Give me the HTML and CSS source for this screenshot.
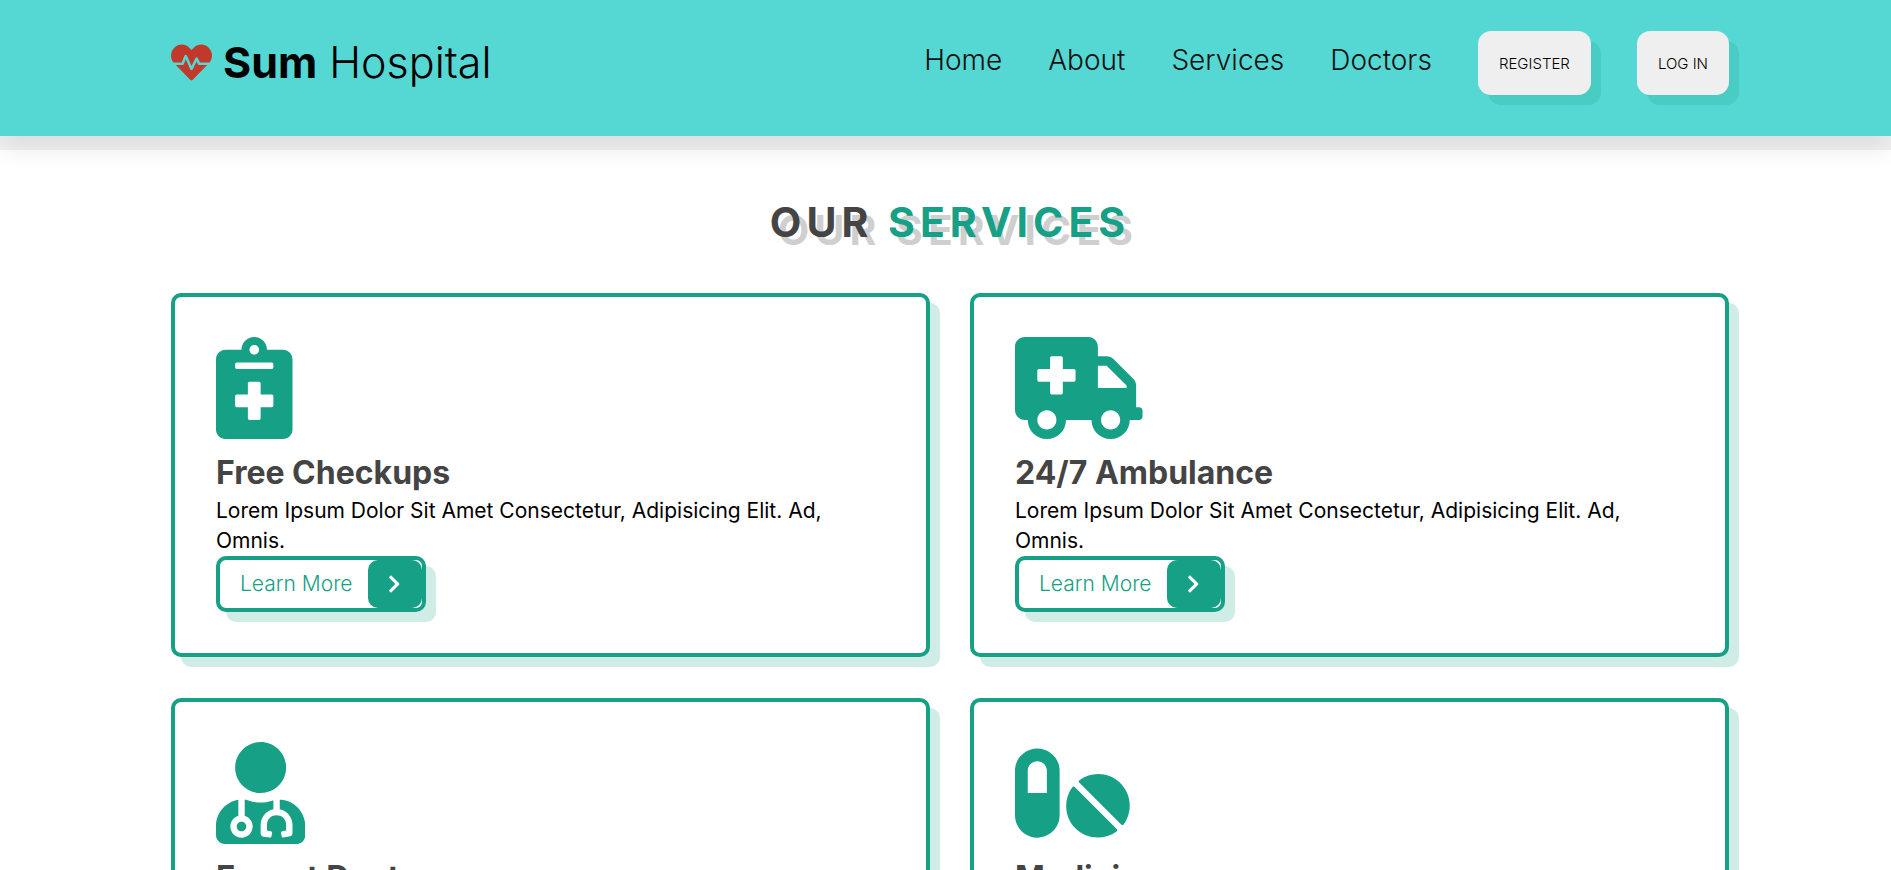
FILE: index.html
```html
<!DOCTYPE html>
<html lang="en">
<head>
<meta charset="utf-8">
<title>Sum Hospital</title>
<link rel="stylesheet" href="styles.css">
</head>
<body>
<header class="header">
  <a class="logo" href="#home">
    <svg class="logo-icon" viewBox="0 0 512 512" aria-hidden="true"><path d="M320.2 243.8l-49.7 99.4c-6 12.1-23.4 11.7-28.9-.6l-56.9-126.3-30 71.7H60.6l182.5 186.5c7.1 7.3 18.6 7.3 25.7 0L451.4 288H342.3l-22.1-44.2zM473.7 73.9l-2.4-2.5c-51.5-52.6-135.8-52.6-187.4 0L256 100l-27.9-28.5c-51.5-52.7-135.9-52.7-187.4 0l-2.4 2.4C-10.4 123.7-12.5 203 31 256h102.4l35.9-86.2c5.4-12.9 23.6-13.1 29.3-.4l58.2 129.3 49-97.9c5.9-11.8 22.7-11.8 28.6 0l27.6 55.2H481c43.5-53 41.4-132.3-7.3-182.1z"/></svg>
    <span><strong>Sum</strong> Hospital</span>
  </a>
  <nav class="nav">
    <a href="#home">Home</a>
    <a href="#about">About</a>
    <a href="#services">Services</a>
    <a href="#doctors">Doctors</a>
    <button class="account" type="button">REGISTER</button>
    <button class="account" type="button">LOG IN</button>
  </nav>
</header>
<main class="services" id="services">
  <h1 class="heading">Our <span>Services</span></h1>
  <div class="cards">
    <article class="card">
      <svg class="card-icon" viewBox="0 0 384 512" aria-hidden="true"><path d="M336 64h-80c0-35.3-28.7-64-64-64s-64 28.7-64 64H48C21.5 64 0 85.5 0 112v352c0 26.5 21.5 48 48 48h288c26.5 0 48-21.5 48-48V112c0-26.5-21.5-48-48-48zM192 40c13.3 0 24 10.7 24 24s-10.7 24-24 24-24-10.7-24-24 10.7-24 24-24zm96 304c0 4.400-3.600 8-8 8h-56v56c0 4.400-3.600 8-8 8h-48c-4.400 0-8-3.600-8-8v-56h-56c-4.400 0-8-3.600-8-8v-48c0-4.400 3.600-8 8-8h56v-56c0-4.400 3.600-8 8-8h48c4.400 0 8 3.600 8 8v56h56c4.400 0 8 3.600 8 8v48zm0-192c0 4.400-3.600 8-8 8H104c-4.400 0-8-3.600-8-8v-16c0-4.400 3.600-8 8-8h176c4.400 0 8 3.600 8 8v16z"/></svg>
      <h2>Free Checkups</h2>
      <p>Lorem Ipsum Dolor Sit Amet Consectetur, Adipisicing Elit. Ad, Omnis.</p>
      <a class="more" href="#free-checkups"><span class="more-text">Learn More</span><span class="more-arrow"><svg viewBox="0 0 320 512" aria-hidden="true"><path d="M285.476 272.971L91.132 467.314c-9.373 9.373-24.569 9.373-33.941 0l-22.667-22.667c-9.357-9.357-9.375-24.522-.04-33.901L188.505 256 34.484 101.255c-9.335-9.379-9.317-24.544.04-33.901l22.667-22.667c9.373-9.373 24.569-9.373 33.941 0L285.475 239.03c9.373 9.372 9.373 24.568.001 33.941z"/></svg></span></a>
    </article>
    <article class="card">
      <svg class="card-icon" viewBox="0 0 640 512" aria-hidden="true"><path d="M624 352h-16V243.900c0-12.700-5.100-24.900-14.100-33.900L494 110.100c-9-9-21.200-14.100-33.900-14.100H416V48c0-26.500-21.500-48-48-48H48C21.500 0 0 21.500 0 48v320c0 26.500 21.500 48 48 48h16c0 53 43 96 96 96s96-43 96-96h128c0 53 43 96 96 96s96-43 96-96h48c8.800 0 16-7.200 16-16v-32c0-8.800-7.200-16-16-16zM160 464c-26.500 0-48-21.500-48-48s21.500-48 48-48 48 21.500 48 48-21.500 48-48 48zm144-248c0 4.400-3.600 8-8 8h-56v56c0 4.400-3.600 8-8 8h-48c-4.400 0-8-3.600-8-8v-56h-56c-4.400 0-8-3.600-8-8v-48c0-4.400 3.600-8 8-8h56v-56c0-4.400 3.600-8 8-8h48c4.400 0 8 3.600 8 8v56h56c4.400 0 8 3.600 8 8v48zm176 248c-26.500 0-48-21.500-48-48s21.500-48 48-48 48 21.500 48 48-21.500 48-48 48zm80-208H416V144h44.100l99.900 99.900V256z"/></svg>
      <h2>24/7 Ambulance</h2>
      <p>Lorem Ipsum Dolor Sit Amet Consectetur, Adipisicing Elit. Ad, Omnis.</p>
      <a class="more" href="#ambulance"><span class="more-text">Learn More</span><span class="more-arrow"><svg viewBox="0 0 320 512" aria-hidden="true"><path d="M285.476 272.971L91.132 467.314c-9.373 9.373-24.569 9.373-33.941 0l-22.667-22.667c-9.357-9.357-9.375-24.522-.04-33.901L188.505 256 34.484 101.255c-9.335-9.379-9.317-24.544.04-33.901l22.667-22.667c9.373-9.373 24.569-9.373 33.941 0L285.475 239.03c9.373 9.372 9.373 24.568.001 33.941z"/></svg></span></a>
    </article>
    <article class="card">
      <svg class="card-icon" viewBox="0 0 448 512" aria-hidden="true"><path d="M224 256c70.7 0 128-57.3 128-128S294.7 0 224 0 96 57.3 96 128s57.3 128 128 128zM104 424c0 13.3 10.7 24 24 24s24-10.7 24-24-10.7-24-24-24-24 10.7-24 24zm216-135.400v49c36.500 7.400 64 39.800 64 78.400v41.700c0 7.600-5.400 14.200-12.900 15.700l-32.200 6.400c-4.300.9-8.500-1.900-9.400-6.300l-3.100-15.700c-.9-4.300 1.900-8.600 6.300-9.400l19.300-3.900V416c0-62.800-96-65.100-96 1.900v26.700l19.300 3.900c4.300.9 7.100 5.100 6.300 9.400l-3.100 15.700c-.9 4.300-5.100 7.100-9.400 6.300l-31.200-4.200c-7.900-1.100-13.800-7.800-13.800-15.900V416c0-38.600 27.500-70.900 64-78.400v-45.200c-2.200.7-4.400 1.100-6.600 1.900-18 6.300-37.300 9.800-57.400 9.800s-39.400-3.500-57.400-9.800c-7.400-2.600-14.900-4.200-22.600-5.200v81.600c23.100 6.900 40 28.100 40 53.400 0 30.900-25.100 56-56 56s-56-25.100-56-56c0-25.300 16.900-46.500 40-53.400v-80.400C48.500 301 0 355.800 0 422.400v44.800C0 491.900 20.100 512 44.800 512h358.400c24.700 0 44.800-20.100 44.800-44.800v-44.800c0-72-56.800-130.300-128-133.800z"/></svg>
      <h2>Expert Doctors</h2>
      <p>Lorem Ipsum Dolor Sit Amet Consectetur, Adipisicing Elit. Ad, Omnis.</p>
      <a class="more" href="#expert-doctors"><span class="more-text">Learn More</span><span class="more-arrow"><svg viewBox="0 0 320 512" aria-hidden="true"><path d="M285.476 272.971L91.132 467.314c-9.373 9.373-24.569 9.373-33.941 0l-22.667-22.667c-9.357-9.357-9.375-24.522-.04-33.901L188.505 256 34.484 101.255c-9.335-9.379-9.317-24.544.04-33.901l22.667-22.667c9.373-9.373 24.569-9.373 33.941 0L285.475 239.03c9.373 9.372 9.373 24.568.001 33.941z"/></svg></span></a>
    </article>
    <article class="card">
      <svg class="card-icon" viewBox="0 0 576 512" aria-hidden="true"><path d="M112 32C50.1 32 0 82.1 0 144v224c0 61.9 50.1 112 112 112s112-50.1 112-112V144c0-61.9-50.1-112-112-112zm48 224H64V144c0-26.5 21.5-48 48-48s48 21.5 48 48v112zm139.7-29.7c-3.5-3.5-9.4-3.1-12.3.8-45.3 62.5-40.4 150.1 15.9 206.4 56.3 56.3 143.9 61.2 206.4 15.9 4-2.9 4.3-8.8.8-12.3L299.7 226.3zm229.8-19c-56.3-56.3-143.9-61.2-206.4-15.9-4 2.9-4.3 8.8-.8 12.3l210.8 210.8c3.5 3.5 9.4 3.1 12.3-.8 45.3-62.6 40.5-150.1-15.9-206.4z"/></svg>
      <h2>Medicines</h2>
      <p>Lorem Ipsum Dolor Sit Amet Consectetur, Adipisicing Elit. Ad, Omnis.</p>
      <a class="more" href="#medicines"><span class="more-text">Learn More</span><span class="more-arrow"><svg viewBox="0 0 320 512" aria-hidden="true"><path d="M285.476 272.971L91.132 467.314c-9.373 9.373-24.569 9.373-33.941 0l-22.667-22.667c-9.357-9.357-9.375-24.522-.04-33.901L188.505 256 34.484 101.255c-9.335-9.379-9.317-24.544.04-33.901l22.667-22.667c9.373-9.373 24.569-9.373 33.941 0L285.475 239.03c9.373 9.372 9.373 24.568.001 33.941z"/></svg></span></a>
    </article>
  </div>
</main>
</body>
</html>
```
FILE: styles.css
```css
:root {
  --green: #16a085;
  --ink: #444;
  --soft: rgba(22, 160, 133, .2);
}

* {
  box-sizing: border-box;
  margin: 0;
  padding: 0;
}

body {
  background: #fff;
  font-family: Inter, "Open Sans", sans-serif;
  color: #000;
}

a {
  color: inherit;
  text-decoration: none;
}

.header {
  display: flex;
  justify-content: space-between;
  align-items: flex-start;
  padding: 31px 162px 41px 171px;
  background: #55d7d3;
  box-shadow: 0 14px 0 rgba(0, 0, 0, .05), 0 12px 24px rgba(0, 0, 0, .09);
}

.logo {
  display: flex;
  align-items: center;
  gap: 11px;
  height: 62px;
  font-size: 43px;
  font-weight: 300;
  line-height: 60px;
}

.logo strong {
  font-weight: 700;
}

.logo-icon {
  width: 41px;
  height: 41px;
  fill: #c0392b;
}

.nav {
  display: flex;
  align-items: center;
  gap: 46px;
  font-size: 28px;
  font-weight: 300;
  line-height: 58px;
}

.nav a {
  height: 64px;
  color: #111;
}

.account {
  height: 64px;
  padding: 0 21px;
  border: 0;
  border-radius: 13px;
  background: #efefef;
  box-shadow: 10px 10px 0 var(--soft);
  font-family: inherit;
  font-size: 15px;
  font-weight: 300;
  color: #000;
}

.services {
  padding: 53px 162px 40px 171px;
}

.heading {
  margin-bottom: 38px;
  font-size: 41px;
  font-weight: 700;
  line-height: 66px;
  letter-spacing: 5px;
  text-align: center;
  text-transform: uppercase;
  color: var(--ink);
  text-shadow: 8px 8px 0 rgba(0, 0, 0, .2);
}

.heading span {
  color: var(--green);
}

.cards {
  display: grid;
  grid-template-columns: 1fr 1fr;
  gap: 41px 40px;
}

.card {
  padding: 40px 41px 41px;
  border: 4px solid var(--green);
  border-radius: 10px;
  background: #fff;
  box-shadow: 10px 10px 0 var(--soft);
}

.card-icon {
  display: block;
  height: 102px;
  margin-bottom: 11px;
  fill: var(--green);
}

.card h2 {
  font-size: 32px;
  font-weight: 700;
  line-height: 46px;
  color: var(--ink);
}

.card p {
  font-size: 21px;
  font-weight: 400;
  line-height: 30px;
}

.more {
  display: inline-flex;
  border: 4px solid var(--green);
  border-radius: 10px;
  box-shadow: 10px 10px 0 var(--soft);
  font-size: 21px;
  font-weight: 300;
  line-height: 48px;
  color: var(--green);
  vertical-align: top;
}

.more-text {
  padding: 0 15px 0 20px;
}

.more-arrow {
  display: flex;
  align-items: center;
  justify-content: center;
  width: 54px;
  border-radius: 10px;
  background: var(--green);
}

.more-arrow svg {
  height: 20px;
  fill: #fff;
}
```
